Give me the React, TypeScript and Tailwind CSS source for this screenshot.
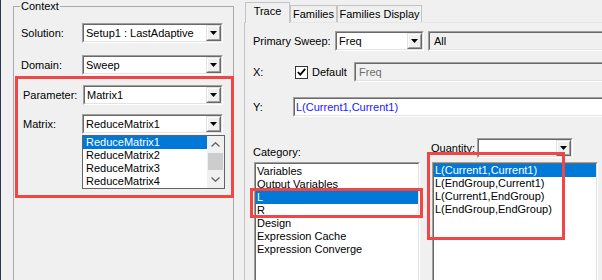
import type { ReactNode } from 'react'

/** Two-tone 3D inset frame used by every combo, edit and list box on this dialog. */
function Sunken({ className = '', inner = '', children }: { className?: string; inner?: string; children?: ReactNode }) {
  return (
    <div className={`border border-t-[#a0a0a0] border-l-[#a0a0a0] border-r-white border-b-white ${className}`}>
      <div className={`h-full border border-t-[#696969] border-l-[#696969] border-r-[#e3e3e3] border-b-[#e3e3e3] ${inner}`}>
        {children}
      </div>
    </div>
  )
}

function DropButton() {
  return (
    <div className="h-full w-[15px] border border-t-[#e3e3e3] border-l-[#e3e3e3] border-r-[#696969] border-b-[#696969]">
      <div className="flex h-full items-center justify-center border border-t-white border-l-white border-r-[#a0a0a0] border-b-[#a0a0a0] bg-[#f0f0f0]">
        <svg width="7" height="4" viewBox="0 0 7 4">
          <path d="M0 0h7L3.5 4z" fill="#000" />
        </svg>
      </div>
    </div>
  )
}

function Combo({ value, className = '' }: { value: string; className?: string }) {
  return (
    <Sunken className={`h-[20px] ${className}`} inner="flex bg-white">
      <span className="flex-1 truncate pl-[2px] leading-[16px]">{value}</span>
      <DropButton />
    </Sunken>
  )
}

function Chevron({ up }: { up?: boolean }) {
  return (
    <svg width="9" height="5" viewBox="0 0 9 5">
      <path d={up ? 'M0.5 4.5L4.5 0.8L8.5 4.5' : 'M0.5 0.5L4.5 4.2L8.5 0.5'} fill="none" stroke="#606060" strokeWidth="1.3" />
    </svg>
  )
}

const matrices = ['ReduceMatrix1', 'ReduceMatrix2', 'ReduceMatrix3', 'ReduceMatrix4']
const categories = ['Variables', 'Output Variables', 'L', 'R', 'Design', 'Expression Cache', 'Expression Converge']
const quantities = ['L(Current1,Current1)', 'L(EndGroup,Current1)', 'L(Current1,EndGroup)', 'L(EndGroup,EndGroup)']

function Tab({ label, active, width }: { label: string; active?: boolean; width: string }) {
  return active ? (
    <div className={`relative z-10 -mb-[1px] flex h-[21px] items-center justify-center border border-b-0 border-[#c4c4c4] bg-[#f0f0f0] pb-[3px] ${width}`}>
      {label}
    </div>
  ) : (
    <div className={`flex h-[17px] items-center justify-center border border-b-0 border-[#c4c4c4] bg-[#f0f0f0] ${width}`}>
      {label}
    </div>
  )
}

export default function App() {
  return (
    <div className="relative flex h-[280px] w-[602px] overflow-hidden bg-[#f0f0f0] font-[family-name:'Liberation_Sans',Arial,sans-serif] text-[11px] leading-[13px] text-black">
      <div className="w-[1px] shrink-0 bg-[#2c3850]" />

      {/* Context group */}
      <div className="w-[243px] shrink-0">
        <div className="relative ml-[12px] mt-[6px] h-[300px] w-[221px] border border-[#a9a9a9]">
          <span className="absolute left-[6px] top-[-7px] bg-[#f0f0f0] px-[1px]">Context</span>
          <div className="flex flex-col pl-[7px] pt-[16px]">
            <div className="flex h-[20px] items-center">
              <span className="w-[61px]">Solution:</span>
              <Combo value="Setup1 : LastAdaptive" className="w-[141px]" />
            </div>
            <div className="mt-[12px] flex h-[20px] items-center">
              <span className="w-[61px]">Domain:</span>
              <Combo value="Sweep" className="w-[141px]" />
            </div>
            <div className="mt-[10px] flex h-[20px] items-center">
              <span className="ml-[2px] w-[60px]">Parameter:</span>
              <Combo value="Matrix1" className="w-[140px]" />
            </div>
            <div className="relative mt-[9px] flex h-[20px] items-center">
              <span className="ml-[2px] w-[59px]">Matrix:</span>
              <Combo value="ReduceMatrix1" className="w-[141px]" />

              {/* open drop-down list of the Matrix combo */}
              <div className="absolute left-[61px] top-[21px] flex h-[54px] w-[143px] border border-[#646464] bg-white">
                <div className="flex-1">
                  {matrices.map((m, i) => (
                    <div key={m} className={`h-[13px] pl-[3px] ${i === 0 ? 'bg-[#0078d7] text-white' : ''}`}>
                      {m}
                    </div>
                  ))}
                </div>
                <div className="flex w-[17px] flex-col bg-[#f0f0f0]">
                  <div className="flex h-[17px] items-center justify-center">
                    <Chevron up />
                  </div>
                  <div className="mx-[1px] h-[17px] bg-[#cdcdcd]" />
                  <div className="flex h-[18px] items-center justify-center">
                    <Chevron />
                  </div>
                </div>
              </div>
            </div>
          </div>
        </div>
      </div>

      {/* Trace tab control */}
      <div className="flex-1">
        <div className="ml-[1px] flex h-[22px] items-end">
          <Tab label="Trace" active width="w-[45px]" />
          <Tab label="Families" width="w-[47px]" />
          <Tab label="Families Display" width="w-[85px]" />
        </div>
        <div className="h-[300px] w-[420px] border-l border-t border-l-[#c4c4c4] border-t-[#e6e6e6] pl-[8px] pt-[8px]">
          <div className="flex h-[20px] items-center">
            <span className="w-[82px]">Primary Sweep:</span>
            <Combo value="Freq" className="w-[89px]" />
            <Sunken className="ml-[4px] h-[20px] flex-1" inner="bg-[#f0f0f0] pl-[4px] leading-[16px]">
              All
            </Sunken>
          </div>

          <div className="mt-[11px] flex h-[20px] items-center">
            <span className="w-[42px]">X:</span>
            <div className="flex h-[13px] w-[13px] items-center justify-center border border-[#333] bg-white">
              <svg width="9" height="8" viewBox="0 0 9 8">
                <path d="M0.8 4L3.3 6.6L8.2 0.9" fill="none" stroke="#000" strokeWidth="1.8" />
              </svg>
            </div>
            <span className="ml-[4px] w-[42px]">Default</span>
            <Sunken className="h-[20px] flex-1" inner="bg-[#f0f0f0] pl-[3px] leading-[16px] text-[#6d6d6d]">
              Freq
            </Sunken>
          </div>

          <div className="mt-[15px] flex h-[20px] items-center">
            <span className="w-[40px]">Y:</span>
            <Sunken className="h-[20px] flex-1" inner="bg-white pl-[1px] leading-[16px] text-[#1a1aff]">
              L(Current1,Current1)
            </Sunken>
          </div>

          <div className="mt-[21px] flex gap-[11px]">
            <div className="w-[167px]">
              <div className="pt-[8px]">Category:</div>
              <Sunken className="ml-[1px] mt-[3px] h-[140px] w-[166px]" inner="bg-white pt-[1px]">
                {categories.map((c) => (
                  <div key={c} className={`h-[13px] pl-[1px] ${c === 'L' ? 'bg-[#0078d7] text-white' : ''}`}>
                    {c}
                  </div>
                ))}
              </Sunken>
            </div>
            <div className="w-[170px]">
              <div className="flex h-[20px] items-center">
                <span className="w-[46px]">Quantity:</span>
                <Combo value="" className="w-[96px]" />
              </div>
              <Sunken className="ml-[1px] mt-[4px] h-[140px] w-[166px]" inner="bg-white">
                {quantities.map((q, i) => (
                  <div key={q} className={`h-[13px] pl-[1px] ${i === 0 ? 'bg-[#0078d7] text-white' : ''}`}>
                    {q}
                  </div>
                ))}
              </Sunken>
            </div>
          </div>
        </div>
      </div>

      {/* red annotation boxes */}
      <div className="absolute left-[15px] top-[76px] h-[122px] w-[219px] border-[3px] border-[#f04646]" />
      <div className="absolute left-[250px] top-[188px] h-[30px] w-[173px] border-[3px] border-[#f04646]" />
      <div className="absolute left-[427px] top-[152px] h-[88px] w-[138px] border-[3px] border-[#f04646]" />
    </div>
  )
}
